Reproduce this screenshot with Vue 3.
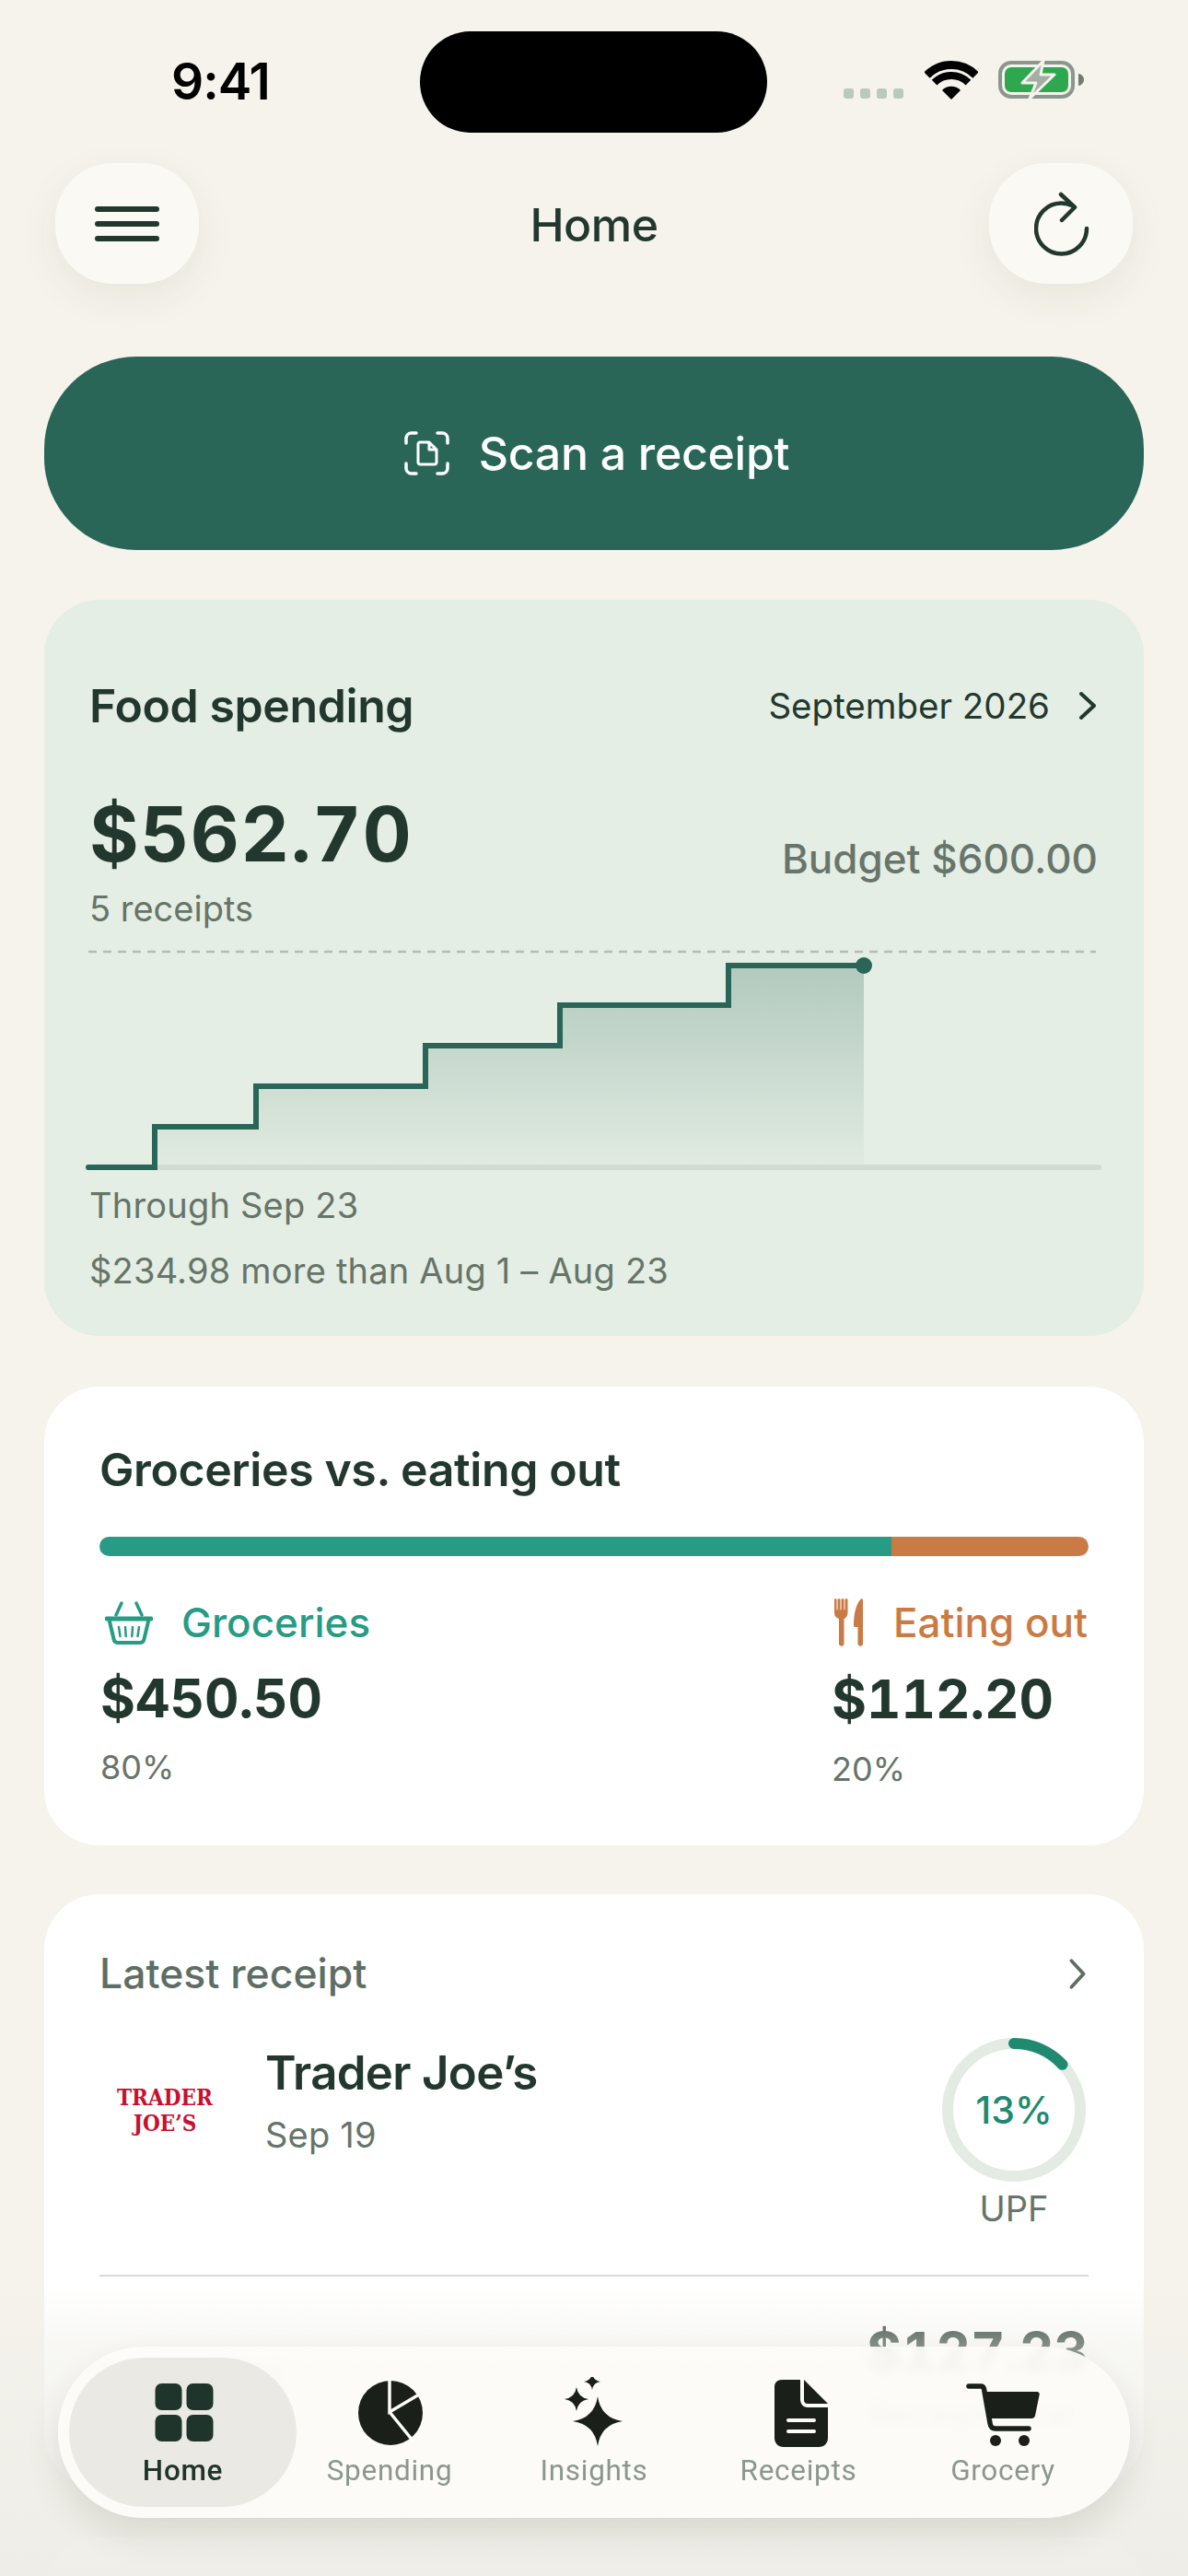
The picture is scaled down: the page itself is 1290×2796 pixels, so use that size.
<script setup>
const navItems = [
  { label: 'Spending', icon: 'pie' },
  { label: 'Insights', icon: 'stars' },
  { label: 'Receipts', icon: 'doc' },
  { label: 'Grocery', icon: 'cart' }
]

// four point star, used by the insights tab
const star = (x, y, r) => {
  const a = r * 0.13
  return `M${x} ${y - r}Q${x + a} ${y - a} ${x + r} ${y}Q${x + a} ${y + a} ${x} ${y + r}Q${x - a} ${y + a} ${x - r} ${y}Q${x - a} ${y - a} ${x} ${y - r}Z`
}
</script>

<template>
  <div class="screen">
    <div class="status-bar">
      <span class="time">9:41</span>
      <div class="island"></div>
      <div class="status-icons">
        <div class="signal"><i></i><i></i><i></i><i></i></div>
        <svg class="wifi" width="58" height="42" viewBox="0 0 58 42">
          <path d="M2.500 15.500A37.500 37.500 0 0 1 55.500 15.500" fill="none" stroke="#000" stroke-width="9" />
          <path d="M10.600 23.600A26 26 0 0 1 47.400 23.600" fill="none" stroke="#000" stroke-width="8" />
          <path d="M29 42L19 32A14 14 0 0 1 39 32Z" fill="#000" />
        </svg>
        <svg class="battery" width="93" height="43" viewBox="0 0 93 43">
          <rect x="2" y="3" width="79" height="37" rx="12" fill="none" stroke="#8a978f" stroke-width="4" />
          <rect x="7" y="8" width="69" height="27" rx="7" fill="#2ea84f" />
          <path d="M87 15c3 0 6 3 6 6.500s-3 6.500-6 6.500z" fill="#6f7d74" />
          <path d="M49 1L26 25H41L34 42L61 16H46Z" fill="#a3aea5" stroke="#f6f3ec" stroke-width="3" stroke-linejoin="round" />
        </svg>
      </div>
    </div>

    <header class="top-bar">
      <button class="round-btn">
        <svg width="70" height="38" viewBox="0 0 70 38">
          <path d="M3 3H67M3 19H67M3 35H67" stroke="#22382f" stroke-width="6" stroke-linecap="round" />
        </svg>
      </button>
      <h1>Home</h1>
      <button class="round-btn">
        <svg class="refresh" width="60" height="70" viewBox="0 0 60 70">
          <path d="M57 40A27.500 27.500 0 1 1 29 12.500C34 12.500 38 13.500 42 15.500" fill="none" stroke="#22382f" stroke-width="4.500" stroke-linecap="round" />
          <path d="M29 3L44 17L30 31" fill="none" stroke="#22382f" stroke-width="4.500" stroke-linecap="round" stroke-linejoin="round" />
        </svg>
      </button>
    </header>

    <button class="scan-btn">
      <svg width="49" height="48" viewBox="0 0 49 48" fill="none" stroke="#fff" stroke-width="3.500" stroke-linecap="round" stroke-linejoin="round">
        <path d="M2 13V8C2 4.500 4.500 2 8 2H13M36 2H41C44.500 2 47 4.500 47 8V13M47 35V40C47 43.500 44.500 46 41 46H36M13 46H8C4.500 46 2 43.500 2 40V35" />
        <path d="M15 14C15 13 16 12 17 12H27L35 20V34C35 35 34 36 33 36H17C16 36 15 35 15 34ZM27 12V20H35" stroke-width="3" />
      </svg>
      <span>Scan a receipt</span>
    </button>

    <section class="card spending">
      <div class="spending-head">
        <h2>Food spending</h2>
        <div class="period">
          <span>September 2026</span>
          <svg width="22" height="32" viewBox="0 0 22 32"><path d="M4 3L18 16L4 29" fill="none" stroke="#22382f" stroke-width="4" stroke-linecap="round" stroke-linejoin="round" /></svg>
        </div>
      </div>
      <div class="amount-row">
        <div class="amount">$562.70</div>
        <div class="budget">Budget $600.00</div>
      </div>
      <div class="receipt-count">5 receipts</div>
      <svg class="chart" width="1194" height="260" viewBox="0 0 1194 260">
        <defs>
          <linearGradient id="area" x1="0" y1="0" x2="0" y2="1">
            <stop offset="0" stop-color="#296657" stop-opacity="0.27" />
            <stop offset="1" stop-color="#296657" stop-opacity="0.02" />
          </linearGradient>
        </defs>
        <path d="M48 13H1142" stroke="#b3bdb4" stroke-width="2.500" stroke-dasharray="9 7" />
        <path d="M120 247V203H230V159H414V115H560V71H743V28H890V247Z" fill="url(#area)" />
        <path d="M48 247H1145" stroke="#d2dbd1" stroke-width="6" stroke-linecap="round" />
        <path d="M48 247H120V203H230V159H414V115H560V71H743V28H890" fill="none" stroke="#296657" stroke-width="6" stroke-linecap="round" />
        <circle cx="890" cy="28" r="9" fill="#296657" />
      </svg>
      <p class="note through">Through Sep 23</p>
      <p class="note compare">$234.98 more than Aug 1 – Aug 23</p>
    </section>

    <section class="card split">
      <h2>Groceries vs. eating out</h2>
      <div class="split-bar">
        <div class="bar-groceries"></div>
        <div class="bar-eating"></div>
      </div>
      <div class="split-cols">
        <div class="col">
          <div class="col-label groceries">
            <svg width="52" height="47" viewBox="0 0 52 47" fill="none" stroke="#279b83" stroke-linecap="round" stroke-linejoin="round">
              <path d="M18 2L12 15M34 2L40 15" stroke-width="3.500" />
              <path d="M2 19H50" stroke-width="5" />
              <path d="M5 22L9.500 41C10 44 11.500 45 14 45H38C40.500 45 42 44 42.500 41L47 22" stroke-width="4" />
              <path d="M15 28L16.500 38M22 28L22.700 38M30 28L29.300 38M37 28L35.500 38" stroke-width="2.500" />
            </svg>
            <span>Groceries</span>
          </div>
          <div class="col-amount">$450.50</div>
          <div class="col-pct">80%</div>
        </div>
        <div class="col col-right">
          <div class="col-label eating">
            <svg width="32" height="52" viewBox="0 0 32 52" fill="#c97a45">
              <path d="M0 1C0 0 2.500 0 2.500 1V11C2.500 13 3.500 13 3.500 11V1C3.500 0 6.500 0 6.500 1V11C6.500 13 7.500 13 7.500 11V1C7.500 0 10.500 0 10.500 1V11C10.500 13 11.500 13 11.500 11V1C11.500 0 14.500 0 14.500 1V15C14.500 19 12.500 21 10.500 22V49C10.500 52.700 5 52.700 5 49V22C2 21 0 19 0 15Z" />
              <path d="M29 0.500C30 0 31 0.500 31 2V49C31 52.700 25.500 52.700 25.500 49V31H22.500C21.500 31 21 30 21 29C21 16 24 5 29 0.500Z" />
            </svg>
            <span>Eating out</span>
          </div>
          <div class="col-amount">$112.20</div>
          <div class="col-pct">20%</div>
        </div>
      </div>
    </section>

    <section class="card latest">
      <div class="latest-head">
        <span>Latest receipt</span>
        <svg width="18" height="32" viewBox="0 0 18 32"><path d="M3 3L15 16L3 29" fill="none" stroke="#5e6e64" stroke-width="3.500" stroke-linecap="round" stroke-linejoin="round" /></svg>
      </div>
      <div class="receipt-row">
        <div class="logo"><span>TRADER</span><span>JOE’S</span></div>
        <div class="receipt-info">
          <div class="store">Trader Joe’s</div>
          <div class="date">Sep 19</div>
        </div>
        <div class="upf">
          <div class="ring">
            <svg width="156" height="156" viewBox="0 0 156 156">
              <circle cx="78" cy="78" r="72" fill="none" stroke="#e3ebe3" stroke-width="12" />
              <circle cx="78" cy="78" r="72" fill="none" stroke="#1f8a70" stroke-width="12" stroke-linecap="round" stroke-dasharray="58.800 452.400" transform="rotate(-90 78 78)" />
            </svg>
            <span>13%</span>
          </div>
          <div class="upf-label">UPF</div>
        </div>
      </div>
      <div class="divider"></div>
      <div class="total-row">
        <div class="card-no">•••• 3113</div>
        <div class="total">
          <div class="total-amount">$127.23</div>
          <div class="total-label">Receipt total</div>
        </div>
      </div>
    </section>

    <section class="card next-card"></section>

    <div class="fade"></div>

    <nav class="tab-bar">
      <div class="tab active">
        <svg width="80" height="80" viewBox="0 0 80 80" fill="#1f352c">
          <rect x="9.500" y="7" width="29" height="29" rx="7" />
          <rect x="43.500" y="7" width="29" height="29" rx="7" />
          <rect x="9.500" y="41" width="29" height="29" rx="7" />
          <rect x="43.500" y="41" width="29" height="29" rx="7" />
        </svg>
        <span>Home</span>
      </div>
      <div v-for="item in navItems" :key="item.label" class="tab">
        <svg width="80" height="80" viewBox="0 0 80 80" fill="#1a1f1a">
          <template v-if="item.icon === 'pie'">
            <circle cx="41" cy="39" r="35" />
            <path d="M40 0V38L72 19M40 38L66 70" fill="none" stroke="#fdfcf8" stroke-width="3.500" />
          </template>
          <template v-else-if="item.icon === 'stars'">
            <path :d="star(44, 48, 27)" />
            <path :d="star(21, 24, 13)" />
            <path :d="star(38, 5, 9)" />
          </template>
          <template v-else-if="item.icon === 'doc'">
            <path d="M22 3H42V24C42 29 45 33 50 33H72V66C72 72 68 76 62 76H24C18 76 14 72 14 66V11C14 6 17 3 22 3Z" />
            <path d="M46 3L72 29H50C47.500 29 46 27.500 46 25Z" />
            <path d="M29 47H57M29 59H57" stroke="#fdfcf8" stroke-width="4" stroke-linecap="round" />
          </template>
          <template v-else>
            <path d="M19 16H77C79 16 80 17.500 79.700 19L75 42C74.500 44 73 45 71 45H25Z" />
            <path d="M3 10H16C18 10 19 11 19.500 13L26 50C26.500 54 28 56 32 56H68" fill="none" stroke="#1a1f1a" stroke-width="5.500" stroke-linecap="round" stroke-linejoin="round" />
            <circle cx="32" cy="69" r="6" />
            <circle cx="63" cy="69" r="6" />
          </template>
        </svg>
        <span>{{ item.label }}</span>
      </div>
    </nav>
  </div>
</template>

<style scoped>
.screen { position: relative; width: 1290px; height: 2796px; overflow: hidden; background: #f6f3ec; font-family: Inter, "Liberation Sans", sans-serif; color: #22382f; }

.status-bar { display: flex; align-items: flex-start; height: 177px; padding: 34px 0 0 186px; box-sizing: border-box; }
.time { width: 270px; font-size: 55px; line-height: 108px; font-weight: 600; color: #000; letter-spacing: -1px; }
.island { width: 377px; height: 110px; border-radius: 55px; background: #000; }
.status-icons { display: flex; align-items: flex-end; margin: 31px 0 0 83px; }
.signal { display: flex; gap: 7px; margin: 0 23px 1px 0; }
.signal i { width: 11px; height: 11px; border-radius: 3px; background: #b8c9be; }
.wifi { margin-right: 22px; }
.battery { display: block; }

.top-bar { display: flex; align-items: center; justify-content: space-between; padding: 0 60px; }
.top-bar h1 { margin: 2px 0 0; font-size: 50px; font-weight: 500; letter-spacing: -0.5px; }
.round-btn { display: flex; align-items: center; justify-content: center; width: 156px; height: 131px; padding: 0; border: none; border-radius: 62px; background: #fbf9f4; box-shadow: 0 14px 44px rgba(60, 55, 40, 0.07); }
.refresh { margin-left: 2px; }

.scan-btn { display: flex; align-items: center; justify-content: center; gap: 32px; width: 1194px; height: 210px; margin: 79px 48px 0; padding: 0 0 0 6px; border: none; border-radius: 100px; background: #296657; color: #fff; font-family: inherit; font-size: 50px; font-weight: 500; letter-spacing: -0.3px; }

.card { width: 1194px; margin-left: 48px; box-sizing: border-box; border-radius: 60px; background: #fff; }
h2 { margin: 0; font-size: 50px; line-height: 60px; font-weight: 600; letter-spacing: -0.4px; }

.spending { height: 799px; margin-top: 54px; padding: 85px 50px 0 49px; background: #e5eee4; }
.spending-head { display: flex; align-items: center; justify-content: space-between; }
.period { display: flex; align-items: center; gap: 30px; font-size: 38.500px; }
.amount-row { display: flex; align-items: flex-start; justify-content: space-between; margin-top: 65px; }
.amount { font-size: 82px; line-height: 90px; font-weight: 700; letter-spacing: 1.500px; font-variant-numeric: tabular-nums; }
.budget { margin-top: 46px; font-size: 44px; line-height: 50px; color: #68756c; font-weight: 500; }
.receipt-count { margin-top: 7px; font-size: 38px; line-height: 44px; color: #667469; }
.chart { display: block; margin: 12px 0 0 -49px; }
.note { margin: 0; font-size: 38px; line-height: 46px; color: #667469; letter-spacing: 0.2px; }
.through { margin-top: 5px; }
.compare { margin-top: 25px; }

.split { height: 498px; margin-top: 55px; padding: 60px 60px 0; }
.split-bar { display: flex; height: 21px; margin-top: 43px; border-radius: 11px; overflow: hidden; }
.bar-groceries { width: 860px; background: #279b83; }
.bar-eating { flex: 1; background: #c97a45; }
.split-cols { display: flex; justify-content: space-between; margin-top: 42px; }
.col { padding-left: 1px; }
.col-right { width: 279px; box-sizing: border-box; margin-top: 2px; padding-left: 0; }
.col-label { display: flex; align-items: center; height: 56px; font-size: 44px; font-weight: 500; }
.col-label svg { flex: none; }
.groceries { gap: 31px; padding: 2px 0 0 5px; color: #279b83; }
.eating { gap: 32px; padding-left: 3px; color: #c97a45; white-space: nowrap; }
.col-amount { margin-top: 19px; font-size: 58px; line-height: 70px; font-weight: 700; font-variant-numeric: tabular-nums; }
.col-pct { margin-top: 18px; font-size: 36px; line-height: 44px; color: #667469; }
.col-right .col-amount { margin-top: 20px; }
.col-right .col-pct { margin-top: 19px; }

.latest { height: 644px; margin-top: 53px; padding: 60px 60px 0; overflow: hidden; }
.latest-head { display: flex; align-items: center; justify-content: space-between; padding-right: 2px; font-size: 44.500px; line-height: 52px; font-weight: 500; color: #5e6e64; }
.latest-head svg { width: 20px; height: 35px; }
.receipt-row { display: flex; align-items: flex-start; margin-top: 44px; }
.logo { display: flex; flex-direction: column; align-items: center; flex: none; width: 142px; margin: 51px 38px 0 0; font-family: "DejaVu Serif Condensed", "DejaVu Serif", serif; font-weight: 700; font-stretch: condensed; font-size: 24px; line-height: 28px; color: #c8102e; }
.receipt-info { flex: 1; padding-top: 7px; }
.store { font-size: 51px; line-height: 62px; font-weight: 600; letter-spacing: -0.7px; }
.date { margin-top: 13px; font-size: 38px; line-height: 46px; color: #667469; letter-spacing: 0.2px; }
.upf { flex: none; width: 156px; margin-right: 3px; text-align: center; }
.ring { display: grid; place-items: center; }
.ring svg, .ring span { grid-area: 1 / 1; }
.ring svg { display: block; }
.ring span { font-size: 41px; font-weight: 500; color: #1f8a70; }
.upf-label { margin-top: 6px; font-size: 38px; line-height: 46px; color: #667469; }
.divider { height: 2px; margin-top: 49px; background: #d6dcd7; }
.total-row { display: flex; justify-content: space-between; margin-top: 46px; }
.card-no { margin-top: 40px; font-size: 44px; line-height: 52px; color: #667469; }
.total-amount { font-size: 58px; line-height: 70px; font-weight: 700; font-variant-numeric: tabular-nums; }
.total-label { margin-top: 10px; font-size: 38px; line-height: 46px; color: #667469; }
.next-card { height: 200px; margin-top: 54px; }

.fade { position: absolute; left: 0; right: 0; top: 2480px; bottom: 0; background: linear-gradient(rgba(240, 239, 233, 0), rgba(240, 239, 233, 0.5) 22%, rgba(238, 237, 231, 0.94) 100%); }

.tab-bar { position: absolute; left: 63px; top: 2547px; display: flex; width: 1164px; height: 186px; box-sizing: border-box; padding: 12px; border-radius: 93px; background: rgba(253, 252, 248, 0.9); backdrop-filter: blur(6px); box-shadow: 0 18px 36px rgba(60, 55, 40, 0.12); }
.tab { display: flex; flex-direction: column; align-items: center; flex: none; width: 222px; height: 162px; padding-top: 21px; box-sizing: border-box; font-size: 31.500px; line-height: 36px; letter-spacing: 0.7px; color: #8a978f; font-family: Roboto, Inter, sans-serif; }
.tab svg { display: block; margin-bottom: 4px; }
.tab.active { width: 247px; margin-right: -10px; border-radius: 81px; background: rgba(232, 230, 225, 0.85); color: #1f352c; font-weight: 500; }
</style>

<style>
html, body { margin: 0; background: #f6f3ec; }
</style>
